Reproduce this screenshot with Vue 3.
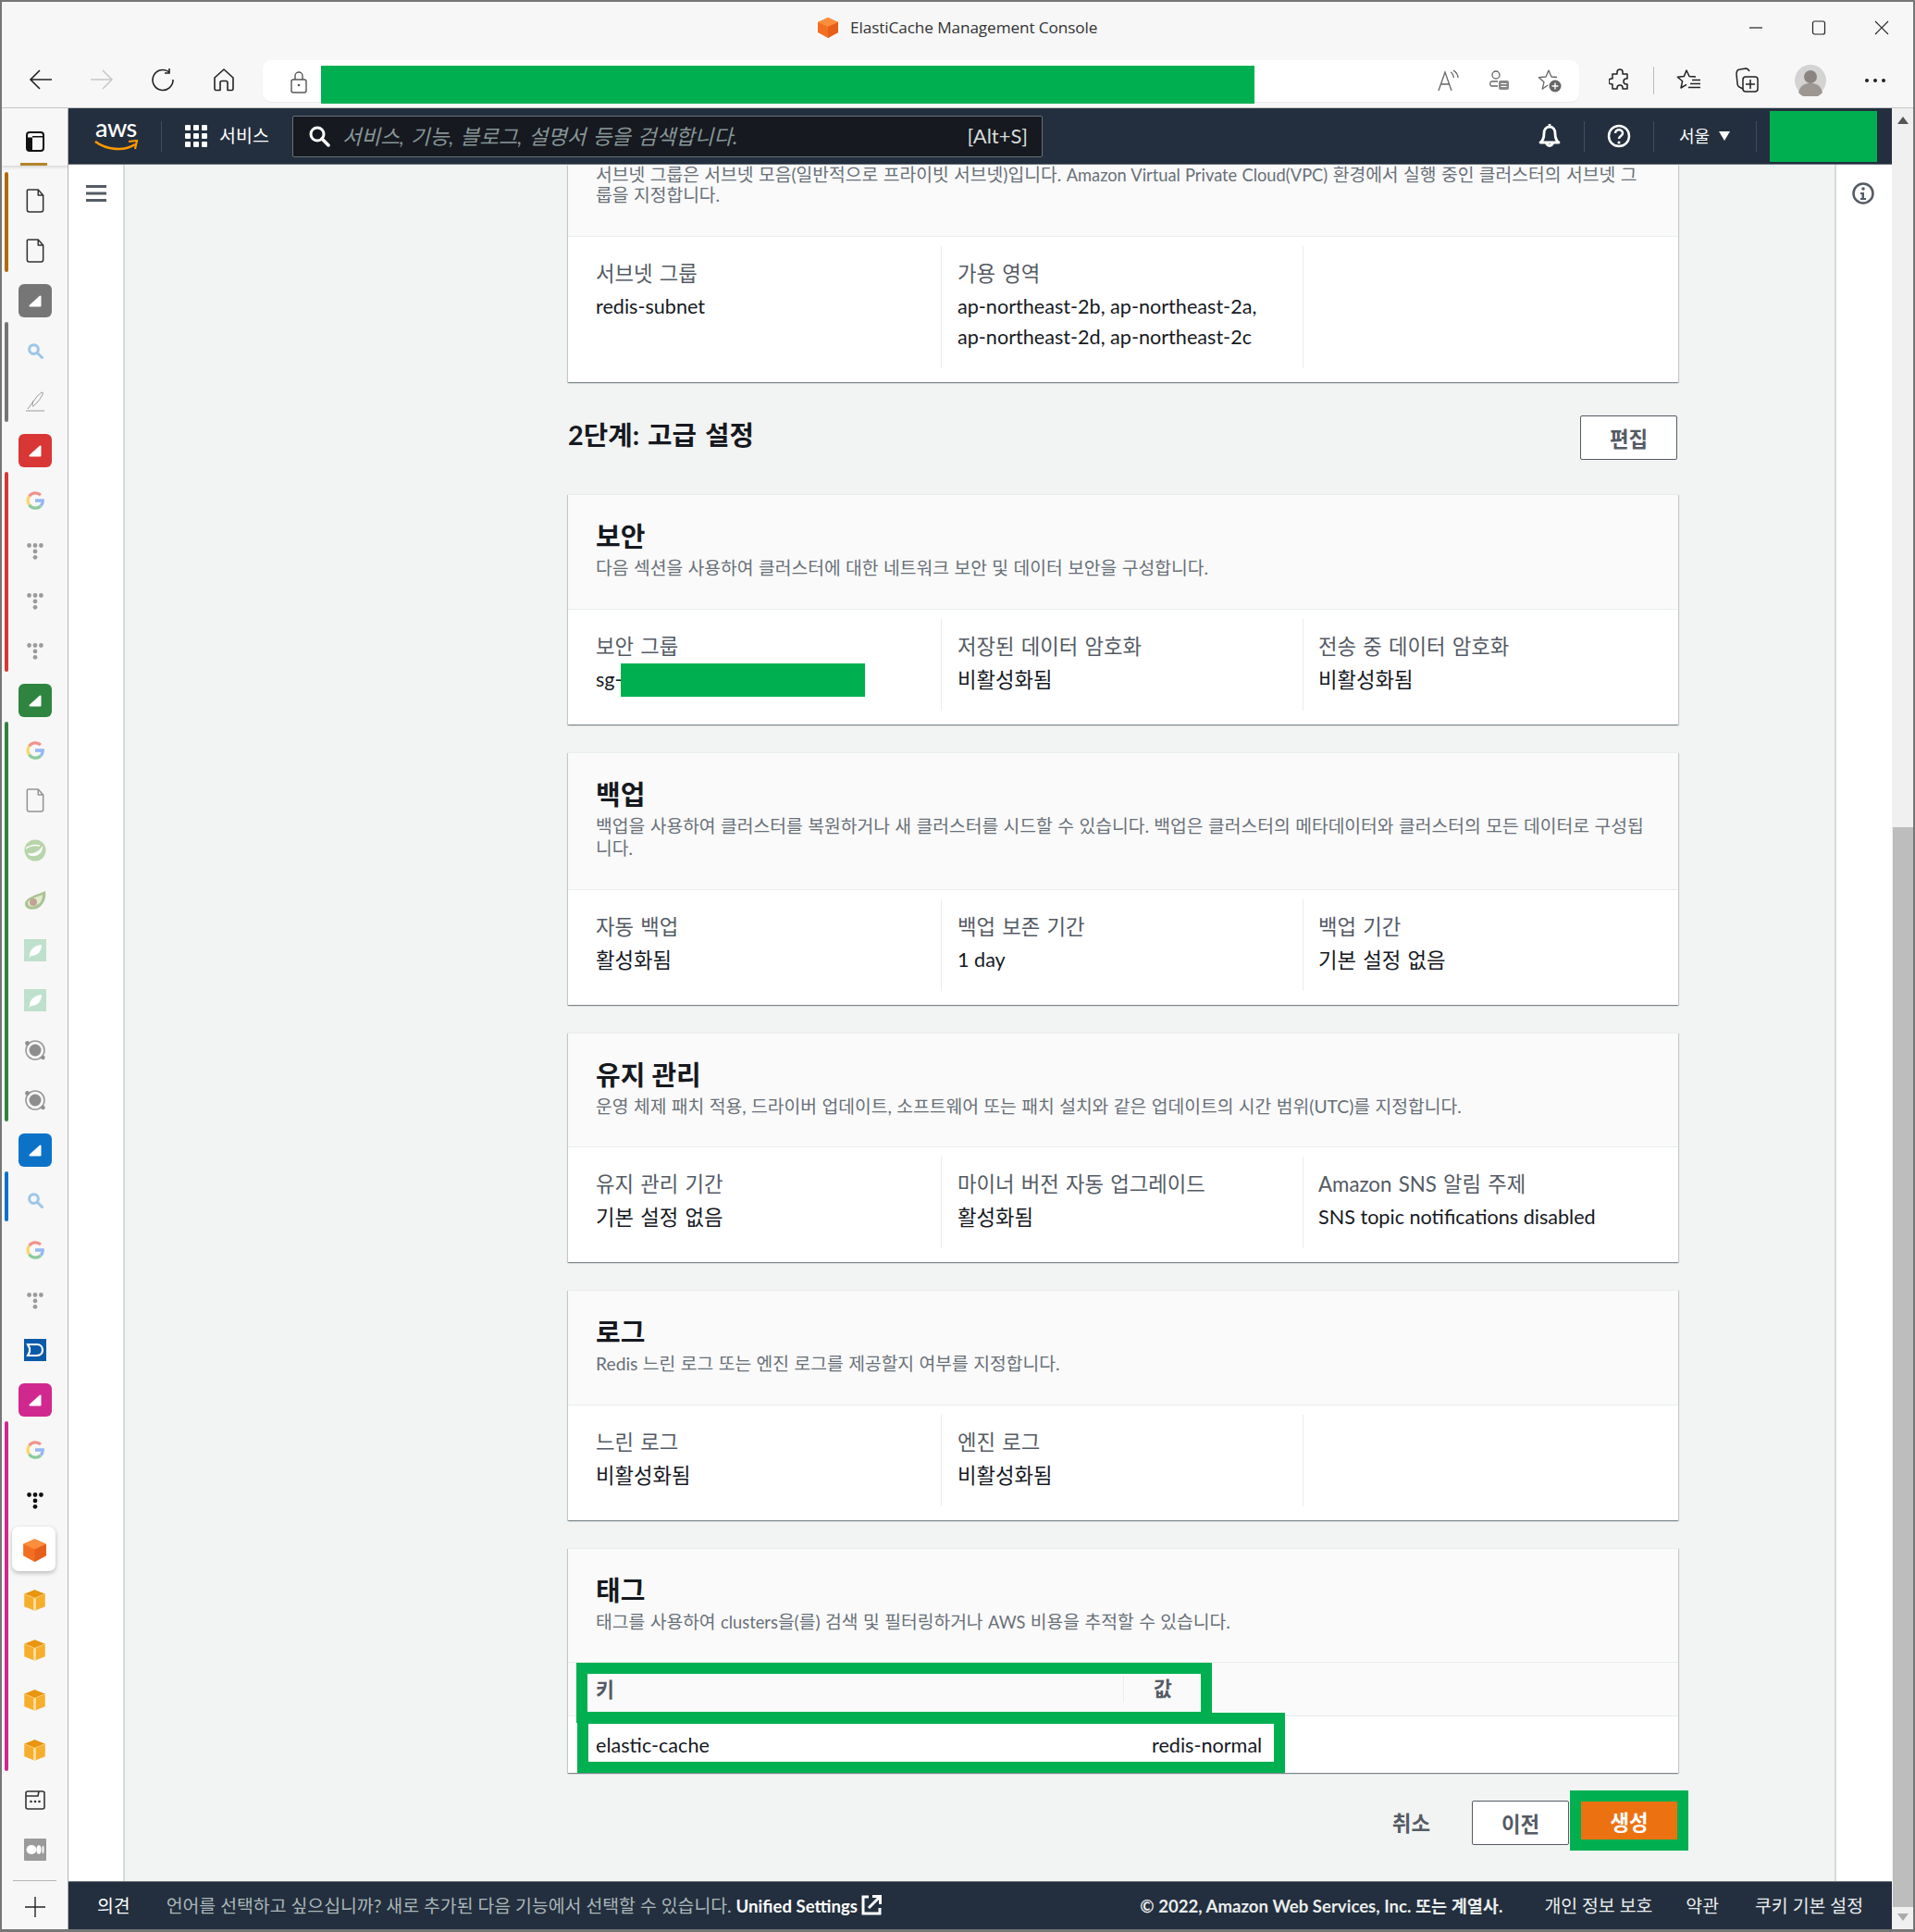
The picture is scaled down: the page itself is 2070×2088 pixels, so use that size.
<template>
  <div class="window">
    <!-- shared icon sprites -->
    <svg class="sprites" width="0" height="0">
      <symbol id="i-file" viewBox="0 0 24 24"><path d="M5 1h10l5 5.500V21a2 2 0 0 1-2 2H6a2 2 0 0 1-2-2V2a1 1 0 0 1 1-1zM15 1v5.500h5" fill="none" stroke="#333" stroke-width="1.400" stroke-linejoin="round"/></symbol>
      <symbol id="i-search" viewBox="0 0 24 24"><circle cx="10" cy="10" r="6.500" fill="none" stroke="#9cc6e8" stroke-width="4"/><path d="M15 15L22 22" stroke="#9cc6e8" stroke-width="4" stroke-linecap="round"/></symbol>
      <symbol id="i-pen" viewBox="0 0 24 24"><path d="M4 21C7 17 17 2 20 3c2 2-7 13-10 15-2 1 0-6 0-6M2 23h20" fill="none" stroke="#999" stroke-width="1"/></symbol>
      <symbol id="i-google" viewBox="0 0 24 24">
        <path d="M5 7a9 9 0 0 1 13.500-1.500" fill="none" stroke="#ea4335" stroke-width="3.600"/>
        <path d="M5 7a9 9 0 0 0 0 10" fill="none" stroke="#fbbc05" stroke-width="3.600"/>
        <path d="M5 17a9 9 0 0 0 13.500 1.500" fill="none" stroke="#34a853" stroke-width="3.600"/>
        <path d="M18.500 18.500a9 9 0 0 0 2.500-6.500h-9" fill="none" stroke="#4285f4" stroke-width="3.600"/>
      </symbol>
      <symbol id="i-dots" viewBox="0 0 24 24"><circle cx="5" cy="6" r="2.600"/><circle cx="12" cy="6" r="2.600"/><circle cx="19" cy="6" r="2.600"/><circle cx="12" cy="13" r="2.600"/><circle cx="12" cy="20" r="2.600"/></symbol>
      <symbol id="i-spring" viewBox="0 0 24 24"><circle cx="12" cy="12" r="11.500" fill="#a9cc97"/><path d="M4 15c6 1 12-1 16-8 1 8-6 12-12 11-2 0-4-2-4-3z" fill="#fff"/><path d="M2 10c4-3 10-4 15-3" stroke="#fff" stroke-width="1.500" fill="none"/></symbol>
      <symbol id="i-avocado" viewBox="0 0 24 24"><path d="M23 2c1 7-1 15-9 19C8 23 1 21 1 16 1 9 14 6 23 2z" fill="#9dbb84"/><path d="M20 6c0 5-2 10-8 12-4 2-8 0-8-3 0-4 9-6 16-9z" fill="#dfe8c4"/><circle cx="10" cy="14" r="4" fill="#b89585"/></symbol>
      <symbol id="i-leaf" viewBox="0 0 24 24"><rect width="24" height="24" fill="#bfe0cc"/><path d="M6 18c0-7 5-11 13-12 0 7-4 12-11 12l-3 2z" fill="#fff"/></symbol>
      <symbol id="i-planet" viewBox="0 0 24 24"><circle cx="12" cy="12" r="6.500" fill="#8e8e8e"/><circle cx="12" cy="12" r="10" fill="none" stroke="#9a9a9a" stroke-width="1.600"/><circle cx="3.500" cy="4.500" r="2.400" fill="#8e8e8e"/><circle cx="20.500" cy="20" r="2.200" fill="#8e8e8e"/></symbol>
      <symbol id="i-d" viewBox="0 0 24 24"><rect width="24" height="24" fill="#0a5aa8"/><path d="M4 6h10c4 0 6 3 6 6s-2 6-6 6H4l2-4V10z" fill="none" stroke="#fff" stroke-width="2.200"/></symbol>
      <symbol id="i-cube" viewBox="0 0 24 24"><path d="M12 1l11 5v11l-11 6-11-6V6z" fill="#f26f21"/><path d="M1 6l11 5 11-5-11-5z" fill="#fb8e3c"/><path d="M12 11v12l11-6V6z" fill="#e55f1b"/></symbol>
      <symbol id="i-box" viewBox="0 0 24 24"><path d="M12 2l10 4v12l-10 4-10-4V6z" fill="#f6ae2d"/><path d="M2 6l10 4 10-4-10-4z" fill="#e9950f"/><path d="M12 10v12" stroke="#fbe0a6" stroke-width="2.400"/><path d="M2 6l10 4 10-4" stroke="#fbd184" stroke-width=".8" fill="none"/></symbol>
      <symbol id="i-cal" viewBox="0 0 24 24"><path d="M4 3h16a2 2 0 0 1 2 2v15a2 2 0 0 1-2 2H4a2 2 0 0 1-2-2V5a2 2 0 0 1 2-2zM2 8h13l1-5" fill="none" stroke="#333" stroke-width="1.600"/><circle cx="7.500" cy="14" r="1.300" fill="#333"/><circle cx="12" cy="14" r="1.300" fill="#333"/><circle cx="16.500" cy="14" r="1.300" fill="#333"/></symbol>
      <symbol id="i-medium" viewBox="0 0 24 24"><rect width="24" height="24" rx="1" fill="#9a9a9a"/><ellipse cx="8" cy="12" rx="5.500" ry="5" fill="#fff"/><ellipse cx="16" cy="12" rx="2.500" ry="4.700" fill="#fff"/><ellipse cx="20.500" cy="12" rx="1" ry="4.200" fill="#fff"/></symbol>
    </svg>

    <div class="titlebar">
      <svg class="title-cube" width="24" height="24"><use href="#i-cube" /></svg>
      <span class="title-text">ElastiCache Management Console</span>
      <div class="win-controls">
        <svg width="16" height="16" viewBox="0 0 16 16"><path d="M1 8h14" stroke="#222" stroke-width="1.200" /></svg>
        <svg width="16" height="16" viewBox="0 0 16 16"><rect x="1.500" y="1" width="13" height="14" rx="2" fill="none" stroke="#222" stroke-width="1.200" /></svg>
        <svg width="16" height="16" viewBox="0 0 16 16"><path d="M1 1l14 14M15 1L1 15" stroke="#222" stroke-width="1.100" /></svg>
      </div>
    </div>

    <div class="toolbar">
      <div class="nav-btns">
        <svg width="26" height="24" viewBox="0 0 26 24"><path d="M25 12H2M12 2L2 12l10 10" fill="none" stroke="#222" stroke-width="1.600" /></svg>
        <svg width="26" height="24" viewBox="0 0 26 24"><path d="M1 12h23M14 2l10 10-10 10" fill="none" stroke="#c8c8c8" stroke-width="1.600" /></svg>
        <svg width="26" height="26" viewBox="0 0 26 26"><path d="M20 5a11 11 0 1 0 4 8M20 1v5h-5" fill="none" stroke="#222" stroke-width="1.600" /></svg>
        <svg class="home" width="24" height="26" viewBox="0 0 24 26"><path d="M2 11L12 2l10 9v12a1.500 1.500 0 0 1-1.500 1.500H16v-8a2 2 0 0 0-2-2h-4a2 2 0 0 0-2 2v8H3.500A1.500 1.500 0 0 1 2 23z" fill="none" stroke="#222" stroke-width="1.600" stroke-linejoin="round" /></svg>
      </div>
      <div class="urlbox">
        <svg class="lock" width="20" height="24" viewBox="0 0 20 24"><rect x="2" y="9" width="16" height="14" rx="2" fill="none" stroke="#555" stroke-width="1.400" /><path d="M6 9V5a4 4 0 0 1 8 0v4" fill="none" stroke="#555" stroke-width="1.400" /><circle cx="10" cy="15" r="1.300" fill="#555" /></svg>
        <div class="url-mask"></div>
        <div class="url-icons">
          <svg width="26" height="24" viewBox="0 0 26 24"><path d="M2 23L9 3l7 20M4.500 16h9M15 3c2 1 3 3 3.500 6M18 1c3 2 5 5 5 8" fill="none" stroke="#666" stroke-width="1.300" /></svg>
          <svg width="26" height="24" viewBox="0 0 26 24"><circle cx="10" cy="6" r="4" fill="none" stroke="#666" stroke-width="1.300" /><path d="M12 18H5a3 3 0 0 1 0-5h7" fill="none" stroke="#666" stroke-width="1.300" /><rect x="13" y="12" width="11" height="10" rx="2" fill="#888" /><path d="M15.500 15.500h6M15.500 18.500h6" stroke="#fff" stroke-width="1.100" /></svg>
          <svg width="28" height="26" viewBox="0 0 28 26"><path d="M22 9.500l-6-.5-3-7-3 7-7.500.7 5.500 5-1.800 7.500L12 18" fill="none" stroke="#666" stroke-width="1.300" stroke-linejoin="round" /><circle cx="20" cy="19" r="6.500" fill="#666" /><path d="M20 15.500v7M16.500 19h7" stroke="#fff" stroke-width="1.400" /></svg>
        </div>
      </div>
      <div class="tool-icons">
        <svg class="ti-ext" width="24" height="26" viewBox="0 0 24 26"><path d="M9 4a3 3 0 0 1 6 0v2h5v5h-1a3 3 0 0 0 0 6h1v5h-5v-1a3 3 0 0 0-6 0v1H4v-5H3a3 3 0 0 1 0-6h1V6h5z" fill="none" stroke="#222" stroke-width="1.500" stroke-linejoin="round" /></svg>
        <i class="tool-sep"></i>
        <svg class="ti-fav" width="28" height="26" viewBox="0 0 28 26"><path d="M21 9l-7-.5L11 2 8.300 8.600l-7 .6 5.300 4.600-1.600 7.200 6-3.600" fill="none" stroke="#222" stroke-width="1.500" stroke-linejoin="round" /><path d="M17 12.500h9M15 16.500h11M13 20.500h13" stroke="#222" stroke-width="1.300" /></svg>
        <svg class="ti-col" width="26" height="28" viewBox="0 0 26 28"><path d="M8 23l-2-1C3 21 2 19 2 17L1 7c0-3 1-5 4-5l6-1c2 0 3 1 4 3" fill="none" stroke="#222" stroke-width="1.500" /><rect x="8" y="10" width="16" height="16" rx="3" fill="none" stroke="#222" stroke-width="1.500" /><path d="M16 13v10M11 18h10" stroke="#222" stroke-width="1.500" /></svg>
        <div class="avatar"><svg width="34" height="34" viewBox="0 0 34 34"><circle cx="17" cy="17" r="17" fill="#d3d3d3" /><circle cx="17" cy="13" r="7" fill="#8a8580" /><path d="M4 30c2-8 7-10 13-10s11 2 13 10a17 17 0 0 1-26 0z" fill="#9c9792" /></svg></div>
        <span class="more"><i></i><i></i><i></i></span>
      </div>
    </div>

    <div class="body">
      <aside class="sidebar">
        <div class="side-head">
          <svg width="20" height="22" viewBox="0 0 20 22"><rect x="1" y="1" width="18" height="20" rx="3" fill="none" stroke="#111" stroke-width="2" /><path d="M1 5h18v1.500H1zM1 5v13a3 3 0 0 0 3 3h3V5z" fill="#111" /></svg>
          <i class="side-stub"></i>
        </div>
        <div class="tabs">
          <div v-for="(tab, i) in tabs" :key="i" class="tab" :class="{ active: tab.active }">
            <i v-if="tab.bar" class="bar" :class="[tab.start && 'bar-start', tab.end && 'bar-end']" :style="{ background: tab.bar }"></i>
            <div v-if="tab.group" class="group" :style="{ background: tab.group }">
              <svg width="14" height="13" viewBox="0 0 14 13"><path d="M1.500 11.500L12.500 1.500v10z" fill="#fff" stroke="#fff" stroke-width="2" stroke-linejoin="round" /></svg>
            </div>
            <svg v-else class="tab-icon" :style="{ opacity: tab.op || 1, fill: tab.fill || '#9b9b9b' }" :width="tab.s || 24" :height="tab.s || 24"><use :href="'#i-' + tab.icon" /></svg>
          </div>
        </div>
        <div class="side-add">
          <svg width="24" height="24" viewBox="0 0 24 24"><path d="M12 1v22M1 12h22" stroke="#222" stroke-width="1.400" /></svg>
        </div>
      </aside>

      <div class="page">
        <header class="aws-head">
          <div class="aws-logo">
            <span>aws</span>
            <svg width="48" height="14" viewBox="0 0 48 14"><path d="M1 2c12 9 31 11 43 3" fill="none" stroke="#f90" stroke-width="2.600" /><path d="M37 2l9-1-2 9" fill="none" stroke="#f90" stroke-width="2.200" /></svg>
          </div>
          <i class="head-sep"></i>
          <div class="svc">
            <div class="grid-ic"><i v-for="n in 9" :key="n"></i></div>
            <span>서비스</span>
          </div>
          <div class="search">
            <svg width="24" height="24" viewBox="0 0 24 24"><circle cx="10" cy="10" r="7" fill="none" stroke="#fff" stroke-width="3" /><path d="M15 15l7 7" stroke="#fff" stroke-width="3.500" stroke-linecap="round" /></svg>
            <span class="ph">서비스, 기능, 블로그, 설명서 등을 검색합니다.</span>
            <span class="kbd">[Alt+S]</span>
          </div>
          <div class="head-right">
            <div class="hcell bell">
              <svg width="24" height="28" viewBox="0 0 24 28"><path d="M12 1v3M12 4c-4 0-6 3-6 7 0 5-1 8-4 10h20c-3-2-4-5-4-10 0-4-2-7-6-7zM8.500 21a3.500 3.500 0 0 0 7 0" fill="none" stroke="#fff" stroke-width="2.800" stroke-linejoin="round" /></svg>
            </div>
            <div class="hcell help">
              <svg width="26" height="26" viewBox="0 0 26 26"><circle cx="13" cy="13" r="11" fill="none" stroke="#fff" stroke-width="2.500" /><path d="M9 10c0-5 8-5 8 0 0 3-4 3-4 6" fill="none" stroke="#fff" stroke-width="2.500" /><circle cx="13" cy="20" r="1.600" fill="#fff" /></svg>
            </div>
            <div class="hcell region"><span>서울</span><i class="tri"></i></div>
            <div class="mask acct"></div>
          </div>
        </header>

        <div class="page-row">
          <div class="left-nav">
            <svg width="22" height="18" viewBox="0 0 22 18"><path d="M0 1.500h22M0 9h22M0 16.500h22" stroke="#545b64" stroke-width="3" /></svg>
          </div>

          <main class="main">
            <section class="card first">
              <div class="card-head first-head">
                <p class="desc">서브넷 그룹은 서브넷 모음(일반적으로 프라이빗 서브넷)입니다. <span class="lat">Amazon Virtual Private Cloud(VPC)</span> 환경에서 실행 중인 클러스터의 서브넷 그<br>룹을 지정합니다.</p>
              </div>
              <div class="cols">
                <div class="col">
                  <div class="label">서브넷 그룹</div>
                  <div class="value latin">redis-subnet</div>
                </div>
                <div class="col">
                  <div class="label">가용 영역</div>
                  <div class="value latin">ap-northeast-2b, ap-northeast-2a,<br>ap-northeast-2d, ap-northeast-2c</div>
                </div>
                <div class="col"></div>
              </div>
            </section>

            <div class="step-row">
              <h2>2단계: 고급 설정</h2>
              <button class="btn">편집</button>
            </div>

            <section v-for="card in cards" :key="card.title" class="card">
              <div class="card-head">
                <h3>{{ card.title }}</h3>
                <p class="desc">{{ card.desc }}</p>
              </div>
              <div class="cols">
                <div v-for="(f, i) in card.fields" :key="i" class="col">
                  <template v-if="f.label">
                    <div class="label">{{ f.label }}</div>
                    <div class="value" :class="{ 'has-mask': f.mask, latin: isLatin(f.value) }">{{ f.value }}<i v-if="f.mask" class="mask sg-mask"></i></div>
                  </template>
                </div>
              </div>
            </section>

            <section class="card tags">
              <div class="card-head">
                <h3>태그</h3>
                <p class="desc">태그를 사용하여 <span class="lat">clusters</span>을(를) 검색 및 필터링하거나 <span class="lat">AWS</span> 비용을 추적할 수 있습니다.</p>
              </div>
              <div class="tag-row tag-th">
                <div class="th">키</div>
                <div class="th th-2">값</div>
              </div>
              <div class="tag-row tag-td">
                <div>elastic-cache</div>
                <div class="td-2">redis-normal</div>
              </div>
              <i class="mark mark-key"></i>
              <i class="mark mark-val"></i>
            </section>

            <div class="actions">
              <a class="cancel">취소</a>
              <button class="btn">이전</button>
              <button class="btn primary">생성</button>
            </div>
          </main>

          <div class="right-nav">
            <svg width="24" height="24" viewBox="0 0 24 24"><circle cx="12" cy="12" r="10.500" fill="none" stroke="#545b64" stroke-width="2.500" /><circle cx="12" cy="7" r="1.800" fill="#545b64" /><path d="M9 11h4v6h2v2H9v-2h1.500v-4H9z" fill="#545b64" /></svg>
          </div>
        </div>

        <footer class="aws-foot">
          <span class="fb">의견</span>
          <span class="lang">언어를 선택하고 싶으십니까? 새로 추가된 다음 기능에서 선택할 수 있습니다. <b>Unified Settings</b></span>
          <svg width="22" height="22" viewBox="0 0 22 22"><path d="M8 2H2v18h18v-6" fill="none" stroke="#fff" stroke-width="3" /><path d="M8 14L20 2M12 1.500h8.500V10" fill="none" stroke="#fff" stroke-width="3" /></svg>
          <div class="foot-right">
            <span class="copy">© 2022, Amazon Web Services, Inc. 또는 계열사.</span>
            <span class="f-link l1">개인 정보 보호</span>
            <span class="f-link l2">약관</span>
            <span class="f-link l3">쿠키 기본 설정</span>
          </div>
        </footer>
      </div>

      <div class="scrollbar">
        <i class="arrow up"></i>
        <div class="thumb"></div>
        <i class="arrow down"></i>
      </div>
    </div>
  </div>
</template>

<script setup>
const ORANGE = '#b06c00'
const GRAY = '#767676'
const RED = '#d93636'
const GREEN = '#2f853f'
const BLUE = '#0b72c8'
const PINK = '#d0288f'

const G = { icon: 'google', op: 0.55, s: 22 }
const DOTS = { icon: 'dots', s: 22 }
const BOX = { icon: 'box', s: 27 }

const groups = [
  { bar: ORANGE, items: [{ icon: 'file', s: 26 }, { icon: 'file', s: 26 }] },
  { group: GRAY, bar: GRAY, items: [{ icon: 'search', s: 18 }, { icon: 'pen' }] },
  { group: RED, bar: RED, items: [G, DOTS, DOTS, DOTS] },
  {
    group: GREEN,
    bar: GREEN,
    items: [
      G,
      { icon: 'file', op: 0.5, s: 26 },
      { icon: 'spring', op: 0.8 },
      { icon: 'avocado', op: 0.85 },
      { icon: 'leaf' },
      { icon: 'leaf' },
      { icon: 'planet' },
      { icon: 'planet' },
    ],
  },
  { group: BLUE, bar: BLUE, items: [{ icon: 'search', s: 18 }] },
  { items: [G, DOTS, { icon: 'd' }] },
  {
    group: PINK,
    bar: PINK,
    items: [
      G,
      { icon: 'dots', fill: '#111', s: 22 },
      { icon: 'cube', active: true, s: 27 },
      BOX,
      BOX,
      BOX,
      BOX,
    ],
  },
  { items: [{ icon: 'cal' }, { icon: 'medium' }] },
]

// flatten groups to one list, header tab first then its members with the bar
const tabs = groups.flatMap((g) => {
  const out = []
  if (g.group) out.push({ group: g.group })
  g.items.forEach((it, i) => {
    out.push({ ...it, bar: g.bar, start: i === 0, end: i === g.items.length - 1 })
  })
  return out
})

// latin values sit a bit smaller than hangul ones
const isLatin = (s) => /^[\x00-\x7f]+$/.test(s)

const cards = [
  {
    title: '보안',
    desc: '다음 섹션을 사용하여 클러스터에 대한 네트워크 보안 및 데이터 보안을 구성합니다.',
    fields: [
      { label: '보안 그룹', value: 'sg-', mask: true },
      { label: '저장된 데이터 암호화', value: '비활성화됨' },
      { label: '전송 중 데이터 암호화', value: '비활성화됨' },
    ],
  },
  {
    title: '백업',
    desc: '백업을 사용하여 클러스터를 복원하거나 새 클러스터를 시드할 수 있습니다. 백업은 클러스터의 메타데이터와 클러스터의 모든 데이터로 구성됩니다.',
    fields: [
      { label: '자동 백업', value: '활성화됨' },
      { label: '백업 보존 기간', value: '1 day' },
      { label: '백업 기간', value: '기본 설정 없음' },
    ],
  },
  {
    title: '유지 관리',
    desc: '운영 체제 패치 적용, 드라이버 업데이트, 소프트웨어 또는 패치 설치와 같은 업데이트의 시간 범위(UTC)를 지정합니다.',
    fields: [
      { label: '유지 관리 기간', value: '기본 설정 없음' },
      { label: '마이너 버전 자동 업그레이드', value: '활성화됨' },
      { label: 'Amazon SNS 알림 주제', value: 'SNS topic notifications disabled' },
    ],
  },
  {
    title: '로그',
    desc: 'Redis 느린 로그 또는 엔진 로그를 제공할지 여부를 지정합니다.',
    fields: [
      { label: '느린 로그', value: '비활성화됨' },
      { label: '엔진 로그', value: '비활성화됨' },
      {},
    ],
  },
]
</script>

<style>
html,
body {
  margin: 0;
  background: #fff;
}
</style>

<style scoped>
.window {
  width: 2070px;
  height: 2088px;
  box-sizing: border-box;
  border: 2px solid #767676;
  border-bottom-width: 3px;
  background: #f7f7f7;
  display: flex;
  flex-direction: column;
  overflow: hidden;
  font-family: "Lato", "Noto Sans CJK KR", sans-serif;
  color: #16191f;
}
.sprites {
  position: absolute;
}
i {
  font-style: normal;
  display: block;
}

/* browser chrome */
.titlebar {
  height: 63px;
  flex: none;
  display: flex;
  align-items: center;
  padding-left: 881px;
  box-sizing: border-box;
  padding-bottom: 8px;
}
.title-text {
  margin-left: 12px;
  font-family: "Open Sans", sans-serif;
  font-size: 17.200px;
  color: #333;
  letter-spacing: -0.1px;
}
.win-controls {
  margin-left: auto;
  display: flex;
  gap: 52px;
  margin-right: 26px;
}
.toolbar {
  height: 52px;
  flex: none;
  box-sizing: border-box;
  border-bottom: 1px solid #c6c6c6;
  display: flex;
  align-items: flex-start;
}
.nav-btns {
  display: flex;
  gap: 40px;
  width: 282px;
  padding: 8px 0 0 29px;
  box-sizing: border-box;
  align-items: center;
}
.home {
  margin-left: 1px;
}
.urlbox {
  width: 1423px;
  height: 45px;
  background: #fff;
  border-radius: 9px;
  display: flex;
  align-items: flex-start;
  box-shadow: 0 1px 2px rgba(0, 0, 0, 0.06);
}
.lock {
  margin: 12px 0 0 29px;
  flex: none;
}
.url-mask {
  width: 1009px;
  height: 41px;
  margin: 6px 0 0 14px;
  background: #00b050;
  flex: none;
}
.url-icons {
  margin-left: auto;
  margin-right: 18px;
  display: flex;
  gap: 28px;
  align-items: center;
  padding-top: 9px;
}
.tool-icons {
  display: flex;
  align-items: center;
  padding: 5px 0 0 32px;
}
.tool-sep {
  width: 1px;
  height: 30px;
  background: #bbb;
  margin: 0 24px;
}
.ti-col {
  margin-left: 36px;
}
.avatar {
  margin-left: 38px;
  height: 34px;
}
.more {
  display: flex;
  gap: 5px;
  margin-left: 42px;
}
.more i {
  width: 4px;
  height: 4px;
  border-radius: 50%;
  background: #222;
}

.body {
  flex: 1;
  display: flex;
  min-height: 0;
}

/* vertical tabs */
.sidebar {
  width: 72px;
  flex: none;
  box-sizing: border-box;
  border-right: 1px solid #b5b5b5;
  display: flex;
  flex-direction: column;
}
.side-head {
  height: 64px;
  box-sizing: border-box;
  display: flex;
  justify-content: center;
  align-items: center;
  padding: 11px 0 0 0;
  box-shadow: 0 2px 3px rgba(0, 0, 0, 0.12);
  position: relative;
  z-index: 1;
  background: #f7f7f7;
}
.side-stub {
  position: absolute;
  left: 20px;
  bottom: 0;
  width: 29px;
  height: 3px;
  background: #b5852c;
}
.tabs {
  padding-top: 7px;
}
.tab {
  height: 54px;
  box-sizing: border-box;
  padding: 9px 0 0 0;
  display: flex;
  align-items: center;
  justify-content: center;
  position: relative;
}
.tab.active::before {
  content: "";
  position: absolute;
  left: 11px;
  top: 6px;
  width: 47px;
  height: 48px;
  background: #fff;
  border-radius: 7px;
  box-shadow: 0 2px 5px rgba(0, 0, 0, 0.25);
}
.tab-icon {
  position: relative;
}
.group {
  width: 36px;
  height: 36px;
  border-radius: 6px;
  display: flex;
  align-items: center;
  justify-content: center;
}
.bar {
  position: absolute;
  left: 3px;
  top: 0;
  bottom: 0;
  width: 4px;
}
.bar-start {
  border-radius: 3px 3px 0 0;
}
.bar-end {
  border-radius: 0 0 3px 3px;
}
.bar-start.bar-end {
  border-radius: 3px;
}
.side-add {
  margin: 10px 12px 0;
  border-top: 1px solid #b5b5b5;
  height: 50px;
  display: flex;
  align-items: center;
  justify-content: center;
  padding-top: 4px;
}

.page {
  flex: 1;
  min-width: 0;
  display: flex;
  flex-direction: column;
  background: #fff;
}

/* console header */
.aws-head {
  height: 61px;
  flex: none;
  box-sizing: border-box;
  background: #232f3e;
  border-bottom: 1px solid #687078;
  display: flex;
  align-items: center;
  color: #fff;
}
.aws-logo {
  width: 50px;
  margin-left: 28px;
  height: 44px;
  position: relative;
  flex: none;
}
.aws-logo span {
  display: block;
  font-family: "Lato", sans-serif;
  font-size: 27px;
  font-weight: 500;
  line-height: 26px;
  letter-spacing: -0.5px;
  margin-left: 1px;
}
.aws-logo svg {
  position: absolute;
  left: 0;
  top: 26px;
}
.head-sep {
  width: 1px;
  height: 33px;
  background: #414d5c;
  margin-left: 22px;
}
.svc {
  display: flex;
  align-items: center;
  width: 141px;
  padding-left: 25px;
  box-sizing: border-box;
  font-size: 19.500px;
}
.svc span {
  margin-left: 13px;
  margin-top: -3px;
}
.grid-ic {
  display: grid;
  grid-template-columns: repeat(3, 6px);
  gap: 3px;
}
.grid-ic i {
  height: 6px;
  background: #fff;
  border-radius: 1px;
}
.search {
  width: 811px;
  height: 45px;
  box-sizing: border-box;
  background: #16191f;
  border: 1px solid #687078;
  border-radius: 2px;
  display: flex;
  align-items: center;
  padding: 0 15px 0 16px;
}
.ph {
  margin-left: 13px;
  font-style: italic;
  font-size: 22.400px;
  word-spacing: 2px;
  color: #879596;
  margin-top: -3px;
}
.kbd {
  margin-left: auto;
  margin-top: -2px;
  font-size: 22px;
  color: #d5dbdb;
}
.head-right {
  display: flex;
  align-items: center;
  margin-left: auto;
}
.hcell {
  height: 33px;
  box-sizing: border-box;
  border-right: 1px solid #414d5c;
  display: flex;
  align-items: center;
  justify-content: center;
}
.bell {
  width: 96px;
  justify-content: flex-end;
  padding-right: 25px;
}
.help {
  width: 75px;
}
.region {
  width: 111px;
  font-size: 18px;
  justify-content: flex-start;
  padding-left: 27px;
}
.region span {
  margin-top: -3px;
}
.tri {
  width: 0;
  height: 0;
  border-left: 6px solid transparent;
  border-right: 6px solid transparent;
  border-top: 10px solid #fff;
  margin-left: 10px;
}
.mask {
  background: #00b050;
}
.acct {
  width: 116px;
  height: 55px;
  margin: 0 16px 0 14px;
}

.page-row {
  flex: 1;
  display: flex;
  min-height: 0;
}
.left-nav {
  width: 61px;
  flex: none;
  box-sizing: border-box;
  border-right: 2px solid #d5dbdb;
  padding: 22px 0 0 19px;
}
.main {
  flex: 1;
  background: #f2f3f3;
  padding-left: 479px;
  overflow: hidden;
}
.right-nav {
  width: 62px;
  flex: none;
  box-sizing: border-box;
  border-left: 2px solid #d5dbdb;
  padding: 19px 0 0 17px;
}

/* cards */
.card {
  width: 1200px;
  background: #fff;
  margin-bottom: 30px;
  box-shadow: 0 1px 1px 0 rgba(0, 28, 36, 0.3), 1px 1px 1px 0 rgba(0, 28, 36, 0.15), -1px 1px 1px 0 rgba(0, 28, 36, 0.15);
}
.card-head {
  box-sizing: border-box;
  background: #fafafa;
  padding: 28px 30px 31px;
  border-bottom: 1px solid #eaeded;
  border-top: 1px solid #eaeded;
}
.first {
  margin-bottom: 36px;
}
.first-head {
  padding: 0 30px;
  border-top: 0;
  height: 78px;
}
.first-head .desc {
  margin: 0;
  line-height: 22px;
  width: 1160px;
}
h3 {
  margin: 0;
  font-size: 29px;
  line-height: 34px;
  font-weight: 700;
}
.desc {
  margin: 5px 0 0;
  font-size: 19.300px;
  line-height: 24.500px;
  word-spacing: 0.500px;
  color: #687078;
  width: 1150px;
}
.lat {
  font-size: 18.300px;
}
.cols {
  display: grid;
  grid-template-columns: repeat(3, 391px);
  padding: 10px 14px 15px 12px;
}
.col {
  box-sizing: border-box;
  padding: 15px 17px 17px;
  border-left: 1px solid #eaeded;
}
.col:first-child {
  border-left: 0;
  padding-left: 18px;
}
.col:nth-child(3) {
  padding-left: 16px;
}
.label {
  font-size: 22.300px;
  line-height: 30px;
  word-spacing: 1.500px;
  color: #545b64;
}
.value {
  font-size: 22.300px;
  line-height: 33px;
  margin-top: 4px;
  word-spacing: 1.500px;
  color: #16191f;
}
.value.latin {
  font-size: 21.600px;
  word-spacing: 0;
}
.has-mask {
  position: relative;
}
.sg-mask {
  position: absolute;
  left: 27px;
  top: -1px;
  width: 264px;
  height: 36px;
}

.step-row {
  width: 1199px;
  height: 48px;
  margin-bottom: 37px;
  display: flex;
  align-items: center;
  justify-content: space-between;
}
h2 {
  margin: 0 0 10px;
  font-size: 28.800px;
  font-weight: 700;
  word-spacing: 2px;
}
.btn {
  width: 105px;
  height: 48px;
  padding: 0;
  background: #fff;
  border: 1px solid #545b64;
  border-radius: 2px;
  font-family: inherit;
  font-size: 22.400px;
  font-weight: 700;
  color: #545b64;
}

/* tags */
.tags {
  position: relative;
}
.tag-row {
  display: grid;
  grid-template-columns: 600px 1fr;
  align-items: center;
  font-size: 21.600px;
}
.tag-th {
  height: 58px;
  background: #fafafa;
  border-bottom: 1px solid #eaeded;
  box-sizing: border-box;
  padding-bottom: 2px;
}
.tag-td {
  height: 61px;
}
.th {
  font-weight: 700;
  color: #545b64;
  padding-left: 30px;
}
.th-2 {
  padding-left: 32px;
  border-left: 1px solid #eaeded;
  height: 28px;
  line-height: 28px;
}
.tag-td div:first-child {
  padding-left: 30px;
}
.td-2 {
  padding-left: 31px;
}
.mark {
  position: absolute;
  box-sizing: border-box;
  border: 12px solid #00b050;
}
.mark-key {
  left: 9px;
  top: 124px;
  width: 687px;
  height: 65px;
}
.mark-val {
  left: 10px;
  top: 178px;
  width: 765px;
  height: 65px;
}

.actions {
  width: 1199px;
  display: flex;
  align-items: flex-start;
  justify-content: flex-end;
}
.cancel {
  font-size: 22.400px;
  font-weight: 700;
  color: #545b64;
  margin: 7px 45px 0 0;
}
.primary {
  margin: 1px 0 0 13px;
  height: 41px;
  width: 104px;
  background: #ec7211;
  border: 0;
  border-radius: 0;
  color: #fff;
  outline: 12px solid #00b050;
}

/* console footer */
.aws-foot {
  height: 52px;
  flex: none;
  background: #232f3e;
  border-top: 1px solid #687078;
  box-sizing: border-box;
  display: flex;
  align-items: center;
  font-size: 19.400px;
  color: #d5dbdb;
  padding: 0 0 2px 31px;
}
.fb {
  color: #fff;
  margin-right: 39px;
}
.lang {
  color: #aab7b8;
  margin-right: 4px;
}
.lang b {
  color: #fff;
  font-size: 18.600px;
  font-weight: 700;
}
.foot-right {
  margin-left: auto;
  display: flex;
  align-items: center;
  color: #eaeded;
}
.copy {
  font-size: 18.600px;
  font-weight: 700;
  color: #eaeded;
  margin-right: 45px;
}
.f-link.l2 {
  margin: 0 39px 0 36px;
}
.f-link.l3 {
  margin-right: 31px;
}

.scrollbar {
  width: 23px;
  flex: none;
  background: #f0f0f0;
  display: flex;
  flex-direction: column;
  align-items: center;
}
.arrow {
  width: 0;
  height: 0;
  border-left: 6px solid transparent;
  border-right: 6px solid transparent;
}
.up {
  border-bottom: 8px solid #555;
  margin: 9px 0 0;
}
.down {
  border-top: 8px solid #aaa;
  margin: 7px 0 9px;
}
.thumb {
  width: 22px;
  margin: auto 0 0 0;
  height: 1167px;
  background: #bdbdbd;
}
</style>
